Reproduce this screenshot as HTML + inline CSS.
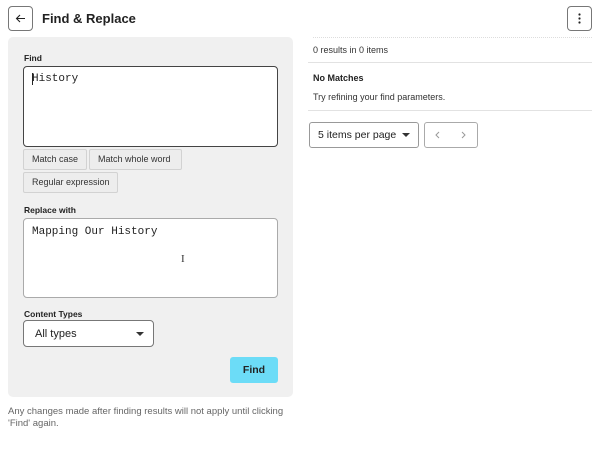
<!DOCTYPE html>
<html><head><style>
*{box-sizing:border-box;margin:0;padding:0}
body{width:600px;height:456px;background:#fff;font-family:"Liberation Sans",sans-serif;color:#222;position:relative;overflow:hidden}
.a{position:absolute}
.btnsq{border:1px solid #777;border-radius:4px;background:#fff}
.lbl{font-size:8.5px;font-weight:bold;color:#222}
.ta{background:#fff;border-radius:4px;font-family:"Liberation Mono",monospace;font-size:11px;padding:7px 8px}
.chip{background:#ededed;border:1px solid #d2d2d2;border-radius:2px;font-size:9px;color:#333;line-height:19px;height:21px;padding:0 0 0 8px;white-space:nowrap;overflow:hidden}
.rule{height:1px;background:#e2e2e2}
</style></head><body>
<div class="a btnsq" style="left:8px;top:6px;width:25px;height:25px">
<svg width="25" height="25" viewBox="0 0 25 25" style="position:absolute;left:-1px;top:-1px"><path d="M17 12.5H8.5M12 9L8.5 12.5L12 16" stroke="#222" stroke-width="1.1" fill="none"/></svg></div>
<div class="a" style="left:42px;top:11px;font-size:13px;font-weight:bold;color:#222">Find &amp; Replace</div>
<div class="a btnsq" style="left:567px;top:6px;width:25px;height:25px">
<svg width="25" height="25" style="position:absolute;left:-1px;top:-1px"><circle cx="12.5" cy="8.5" r="1.1" fill="#222"/><circle cx="12.5" cy="12.5" r="1.1" fill="#222"/><circle cx="12.5" cy="16.5" r="1.1" fill="#222"/></svg></div>

<div class="a" style="left:8px;top:37px;width:285px;height:360px;background:#f0f0f0;border-radius:5px"></div>
<div class="a lbl" style="left:24px;top:53px">Find</div>
<div class="a ta" style="left:23px;top:66px;width:255px;height:81px;border:1.5px solid #444;padding-top:6px">History</div>
<div class="a" style="left:32px;top:73px;width:1px;height:12px;background:#222"></div>
<div class="a chip" style="left:23px;top:149px;width:64px">Match case</div>
<div class="a chip" style="left:89px;top:149px;width:93px">Match whole word</div>
<div class="a chip" style="left:23px;top:172px;width:95px">Regular expression</div>
<div class="a lbl" style="left:24px;top:205px">Replace with</div>
<div class="a ta" style="left:23px;top:218px;width:255px;height:80px;border:1px solid #aaa">Mapping Our History</div>
<div class="a" style="left:181px;top:253px;font-size:11px;font-family:'Liberation Serif',serif;color:#333">I</div>
<div class="a lbl" style="left:24px;top:309px">Content Types</div>
<div class="a" style="left:23px;top:320px;width:131px;height:27px;background:#fff;border:1px solid #777;border-radius:4px;font-size:11px;line-height:26px;padding-left:11px">All types
<svg class="a" style="left:112px;top:11px" width="8" height="5"><path d="M0 0H8L4 4Z" fill="#333"/></svg></div>
<div class="a" style="left:230px;top:357px;width:48px;height:26px;background:#6cdcf7;border-radius:3px;font-size:10.5px;font-weight:bold;text-align:center;line-height:26px">Find</div>
<div class="a" style="left:8px;top:406px;font-size:9.5px;color:#666;line-height:12px;width:290px">Any changes made after finding results will not apply until clicking 'Find' again.</div>

<div class="a" style="left:313px;top:37px;width:279px;border-top:1px dotted #ddd"></div>
<div class="a" style="left:313px;top:45px;font-size:9px;color:#333">0 results in 0 items</div>
<div class="a rule" style="left:308px;top:62px;width:284px"></div>
<div class="a" style="left:313px;top:73px;font-size:9px;font-weight:bold">No Matches</div>
<div class="a" style="left:313px;top:92px;font-size:9px;color:#333">Try refining your find parameters.</div>
<div class="a rule" style="left:308px;top:110px;width:284px"></div>
<div class="a" style="left:309px;top:122px;width:110px;height:26px;border:1px solid #999;border-radius:3px;font-size:10.5px;line-height:24px;padding-left:8px">5 items per page
<svg class="a" style="left:92px;top:10px" width="8" height="5"><path d="M0 0H8L4 4Z" fill="#333"/></svg></div>
<div class="a" style="left:424px;top:122px;width:54px;height:26px;border:1px solid #aaa;border-radius:3px">
<svg width="54" height="26" style="position:absolute;left:-1px;top:-1px"><path d="M15 10L12 13L15 16M38 10L41 13L38 16" stroke="#999" fill="none"/></svg></div>
</body></html>
